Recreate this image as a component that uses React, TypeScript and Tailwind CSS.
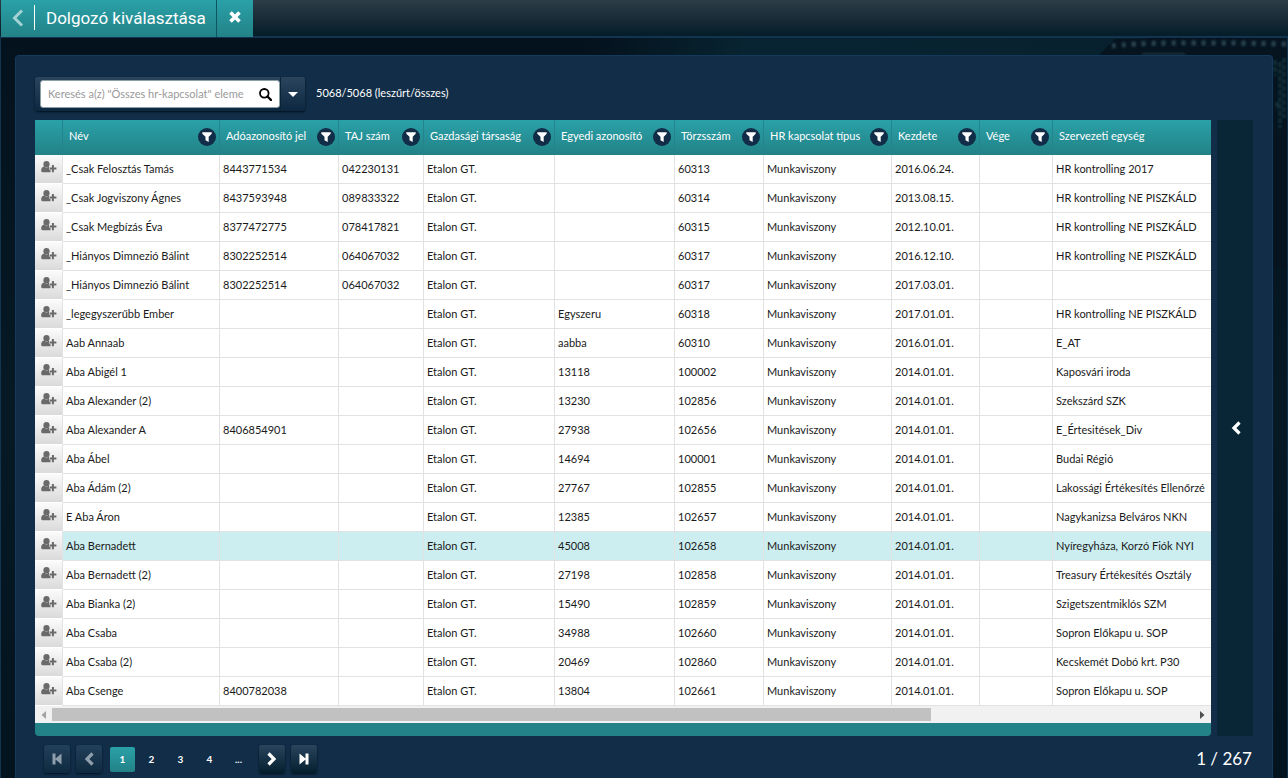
import type { ReactNode } from "react";

type Row = [string, string, string, string, string, string, string];

// name, tax id, TAJ, unique id, staff number, start date, unit
const rows: Row[] = [
  ["_Csak Felosztás Tamás", "8443771534", "042230131", "", "60313", "2016.06.24.", "HR kontrolling 2017"],
  ["_Csak Jogviszony Ágnes", "8437593948", "089833322", "", "60314", "2013.08.15.", "HR kontrolling NE PISZKÁLD"],
  ["_Csak Megbízás Éva", "8377472775", "078417821", "", "60315", "2012.10.01.", "HR kontrolling NE PISZKÁLD"],
  ["_Hiányos Dimnezió Bálint", "8302252514", "064067032", "", "60317", "2016.12.10.", "HR kontrolling NE PISZKÁLD"],
  ["_Hiányos Dimnezió Bálint", "8302252514", "064067032", "", "60317", "2017.03.01.", ""],
  ["_legegyszerűbb Ember", "", "", "Egyszeru", "60318", "2017.01.01.", "HR kontrolling NE PISZKÁLD"],
  ["Aab Annaab", "", "", "aabba", "60310", "2016.01.01.", "E_AT"],
  ["Aba Abigél 1", "", "", "13118", "100002", "2014.01.01.", "Kaposvári iroda"],
  ["Aba Alexander (2)", "", "", "13230", "102856", "2014.01.01.", "Szekszárd SZK"],
  ["Aba Alexander A", "8406854901", "", "27938", "102656", "2014.01.01.", "E_Értesitések_Div"],
  ["Aba Ábel", "", "", "14694", "100001", "2014.01.01.", "Budai Régió"],
  ["Aba Ádám (2)", "", "", "27767", "102855", "2014.01.01.", "Lakossági Értékesítés Ellenőrzé"],
  ["E Aba Áron", "", "", "12385", "102657", "2014.01.01.", "Nagykanizsa Belváros NKN"],
  ["Aba Bernadett", "", "", "45008", "102658", "2014.01.01.", "Nyíregyháza, Korzó Fiók NYI"],
  ["Aba Bernadett (2)", "", "", "27198", "102858", "2014.01.01.", "Treasury Értékesítés Osztály"],
  ["Aba Bianka (2)", "", "", "15490", "102859", "2014.01.01.", "Szigetszentmiklós SZM"],
  ["Aba Csaba", "", "", "34988", "102660", "2014.01.01.", "Sopron Előkapu u. SOP"],
  ["Aba Csaba (2)", "", "", "20469", "102860", "2014.01.01.", "Kecskemét Dobó krt. P30"],
  ["Aba Csenge", "8400782038", "", "13804", "102661", "2014.01.01.", "Sopron Előkapu u. SOP"],
];

const selectedRow = 13;

const columns = [
  { title: "Név", width: "w-[157px]" },
  { title: "Adóazonosító jel", width: "w-[119px]" },
  { title: "TAJ szám", width: "w-[85px]" },
  { title: "Gazdasági társaság", width: "w-[131px]" },
  { title: "Egyedi azonosító", width: "w-[120px]" },
  { title: "Törzsszám", width: "w-[89px]" },
  { title: "HR kapcsolat típus", width: "w-[128px]" },
  { title: "Kezdete", width: "w-[88px]" },
  { title: "Vége", width: "w-[73px]" },
  { title: "Szervezeti egység", width: "" },
];

function Chevron({ className, flip = false }: { className: string; flip?: boolean }) {
  return (
    <svg viewBox="0 0 12 14" className={className} fill="none" stroke="currentColor" strokeWidth="3.200" aria-hidden="true">
      <path d={flip ? "M2.500 1.500 L8 7 L2.500 12.500" : "M9.500 1.500 L4 7 L9.500 12.500"} />
    </svg>
  );
}

function EndIcon({ flip = false }: { flip?: boolean }) {
  return (
    <svg viewBox="0 0 12 14" className="h-[14px] w-[12px]" fill="currentColor" aria-hidden="true">
      {flip ? (
        <path d="M1.500 1.500 L7.500 6.500 V1.500 H10.500 V12.500 H7.500 V7.500 L1.500 12.500 Z" />
      ) : (
        <path d="M1.500 1.500 H4.500 V6.500 L10.500 1.500 V12.500 L4.500 7.500 V12.500 H1.500 Z" />
      )}
    </svg>
  );
}

function PagerButton({ label, dim = false, children }: { label: string; dim?: boolean; children: ReactNode }) {
  return (
    <button
      type="button"
      aria-label={label}
      className={`flex h-7 w-[26px] items-center justify-center rounded-[3px] shadow-[0_1px_2px_#04121f] ${
        dim
          ? "bg-linear-to-b from-[#23405a] to-[#0e2a40] text-[#8f9eab]"
          : "bg-linear-to-b from-[#2a455d] to-[#04202f] text-white"
      }`}
    >
      {children}
    </button>
  );
}

function FilterButton({ title }: { title: string }) {
  return (
    <button
      type="button"
      aria-label={`${title} szűrése`}
      className="flex size-[18px] shrink-0 items-center justify-center rounded-full bg-[#112d47]"
    >
      <svg viewBox="0 0 10 10" className="size-[10px]" fill="white" aria-hidden="true">
        <path d="M0.300 0.300 H9.700 V1.700 L6.700 4.800 V10 L3.500 8.200 V4.800 L0.300 1.700 Z" />
      </svg>
    </button>
  );
}

function UserAddIcon() {
  return (
    <svg viewBox="0 0 16 12" className="h-3 w-4" fill="#6a6a6a" aria-hidden="true">
      <ellipse cx="5.500" cy="3.300" rx="3.100" ry="3.300" />
      <path d="M3 5.600 C1 6.300 0.200 7.300 0.200 9.500 C0.200 10.900 0.800 11.300 2 11.300 H9.500 V8.800 H8.200 V6.200 L8 5.600 Q5.500 7.700 3 5.600 Z" />
      <path d="M10.900 4 H12.900 V6.500 H15.400 V8.500 H12.900 V11.200 H10.900 V8.500 H8.800 V6.500 H10.900 Z" />
    </svg>
  );
}

function Scenery() {
  return (
    <svg className="absolute top-0 right-0 h-[230px] w-[700px]" viewBox="0 0 700 230" aria-hidden="true">
      <defs>
        <linearGradient id="glow" x1="0" x2="1" y1="0" y2="0">
          <stop offset="0" stopColor="#082432" stopOpacity="0" />
          <stop offset="0.300" stopColor="#082432" />
          <stop offset="1" stopColor="#07202e" />
        </linearGradient>
        <filter id="haze">
          <feGaussianBlur stdDeviation="0.8" />
        </filter>
      </defs>
      <rect width="560" height="17" fill="url(#glow)" />
      <path d="M512 17 L528 1 L700 0 V230 H685 V17 Z" fill="#05141f" />
      <g filter="url(#haze)" fill="none">
        <path d="M525 8 Q560 3 700 6" stroke="#2a444f" strokeWidth="5" strokeDasharray="4 6" />
        <path d="M555 16 H598" stroke="#1c323c" strokeWidth="2" />
        <path d="M688 22 V38 M693 24 V90 M697 20 V80 M690 64 V72" stroke="#17313d" strokeWidth="3" strokeDasharray="5 2" />
      </g>
    </svg>
  );
}

export default function App() {
  return (
    <div className="flex min-h-screen flex-col bg-[#04121d] font-[Lato,'Liberation_Sans',sans-serif] text-[11px] text-white">
      <header className="flex h-[38px] border-b-2 border-[#12344f] bg-linear-to-b from-[#2d3c46] to-[#041d29] pl-px">
        <div className="flex h-[37px] shrink-0 bg-linear-to-b from-[#2aa1a8] to-[#228287]">
          <button type="button" aria-label="Vissza" className="flex w-[33px] items-center justify-center pb-0.5 text-[#a4d3d5]">
            <svg viewBox="0 0 12 18" className="h-[18px] w-3" fill="none" stroke="currentColor" strokeWidth="3" aria-hidden="true">
              <path d="M10 1.500 L2.500 9 L10 16.500" />
            </svg>
          </button>
          <h1 className="mt-[5px] mb-[7px] flex items-center border-l border-white pr-[10px] pl-[11px] font-[Roboto,'Noto_Sans',sans-serif] text-[17px] leading-6 whitespace-nowrap">
            Dolgozó kiválasztása
          </h1>
          <button
            type="button"
            aria-label="Bezárás"
            className="flex w-[37px] items-center justify-center border-l border-[#0d5560] pb-1"
          >
            <svg viewBox="0 0 12 12" className="size-3" stroke="white" strokeWidth="3.600" aria-hidden="true">
              <path d="M1.500 1.500 L10.500 10.500 M10.500 1.500 L1.500 10.500" />
            </svg>
          </button>
        </div>
      </header>

      <div className="relative flex flex-1 flex-col border-x border-[#12344f] bg-linear-to-b from-[#04121d] via-[#061925] to-[#04141f] px-[14px] pt-[17px]">
        <Scenery />
        <main className="relative flex flex-1 flex-col rounded-t-[4px] border border-b-0 border-[#14395a] bg-[#112d47] px-[19px] pt-[21px] pb-1">
          <div className="flex items-center">
            <div className="flex h-[34px] w-[270px] rounded-[3px] bg-linear-to-b from-[#2a455d] to-[#0c2840] shadow-[0_1px_2px_#04121f]">
              <label className="my-[3px] ml-[5px] flex h-7 flex-1 items-center rounded-[3px] border border-[#8ba0a4] bg-white pr-[7px] pl-[7px]">
                <input
                  type="text"
                  aria-label="Keresés"
                  placeholder={'Keresés a(z) "Összes hr-kapcsolat" eleme'}
                  className="min-w-0 flex-1 bg-transparent text-[11px] text-black outline-none placeholder:text-[#999999]"
                />
                <svg viewBox="0 0 13 13" className="ml-[3px] size-[13px] shrink-0" fill="none" stroke="black" aria-hidden="true">
                  <circle cx="5.300" cy="5.300" r="4.300" strokeWidth="1.800" />
                  <path d="M8.500 8.500 L12 12" strokeWidth="2.400" strokeLinecap="round" />
                </svg>
              </label>
              <button
                type="button"
                aria-label="Keresési lehetőségek"
                className="flex w-[25px] items-center justify-center border-l border-[#0a2236]"
              >
                <svg viewBox="0 0 10 5" className="h-[5px] w-[10px]" fill="white" aria-hidden="true">
                  <path d="M0 0 H10 L5 5 Z" />
                </svg>
              </button>
            </div>
            <p className="ml-[11px] pb-0.5 text-[11px]">5068/5068 (leszűrt/összes)</p>
          </div>

          <div className="mt-[9px] flex">
            <section className="min-w-0 flex-1 overflow-hidden rounded-b-[4px] bg-[#228287]">
              <div className="overflow-hidden">
                <table className="w-[1532px] table-fixed border-separate border-spacing-0 text-left text-[#1a1a1a]">
                  <thead>
                    <tr className="h-[35px] bg-linear-to-b from-[#2aa1a8] to-[#228287] text-white">
                      <th aria-label="Művelet" className="w-7 border-r border-[#23858b] p-0" />
                      {columns.map((column) => (
                        <th key={column.title} className={`${column.width} border-r border-[#23858b] p-0 pb-px font-normal`}>
                          <div className="flex items-center justify-between pr-[3px] pl-[6px]">
                            <span className="pb-px whitespace-nowrap">{column.title}</span>
                            {column.width && <FilterButton title={column.title} />}
                          </div>
                        </th>
                      ))}
                    </tr>
                  </thead>
                  <tbody>
                    {rows.map(([name, tax, taj, unique, staff, start, unit], index) => (
                      <tr key={index} className={`h-[29px] ${index === selectedRow ? "bg-[#cceef0]" : "bg-white"}`}>
                        <td className="border-r border-b border-r-[#e2e2e2] border-b-white bg-linear-to-b from-[#fbfbfb] to-[#dadada] p-0">
                          <button type="button" aria-label={`${name} kiválasztása`} className="flex h-7 w-full items-center justify-center pb-1">
                            <UserAddIcon />
                          </button>
                        </td>
                        {[name, tax, taj, "Etalon GT.", unique, staff, "Munkaviszony", start, "", unit].map((value, cell) => (
                          <td key={cell} className="border-r border-b border-[#e2e2e2] px-[3px] py-0 whitespace-nowrap">
                            {value}
                          </td>
                        ))}
                      </tr>
                    ))}
                  </tbody>
                </table>
              </div>
              <div className="flex h-[17px] items-center bg-[#f1f1f1]">
                <button type="button" aria-label="Görgetés balra" className="flex w-[17px] justify-center text-[#a3a3a3]">
                  <svg viewBox="0 0 5 8" className="h-2 w-[5px]" fill="currentColor" aria-hidden="true">
                    <path d="M5 0 V8 L0.500 4 Z" />
                  </svg>
                </button>
                <div className="flex-1">
                  <div className="h-[13px] w-[77%] bg-[#c1c1c1]" />
                </div>
                <button type="button" aria-label="Görgetés jobbra" className="flex w-[17px] justify-center text-[#505050]">
                  <svg viewBox="0 0 5 8" className="h-2 w-[5px]" fill="currentColor" aria-hidden="true">
                    <path d="M0 0 V8 L4.500 4 Z" />
                  </svg>
                </button>
              </div>
              <div className="h-[13px]" />
            </section>
            <button
              type="button"
              aria-label="Oldalsó panel megnyitása"
              className="ml-[6px] flex w-9 items-center justify-center bg-[#082636] pl-0.5 text-white"
            >
              <Chevron className="h-[14px] w-3" />
            </button>
          </div>

          <nav aria-label="Lapozás" className="mt-[9px] flex items-center justify-between pr-px pl-[9px]">
            <div className="flex items-center">
              <div className="flex gap-[6px]">
                <PagerButton label="Első oldal" dim>
                  <EndIcon />
                </PagerButton>
                <PagerButton label="Előző oldal" dim>
                  <Chevron className="h-[14px] w-3" />
                </PagerButton>
              </div>
              <div className="mx-2 flex gap-1 text-[10px] font-bold">
                <button type="button" aria-current="page" className="size-[25px] rounded-[2px] bg-linear-to-b from-[#2aa1a8] to-[#228287]">
                  1
                </button>
                <button type="button" className="size-[25px]">2</button>
                <button type="button" className="size-[25px]">3</button>
                <button type="button" className="size-[25px]">4</button>
                <button type="button" className="size-[25px]">...</button>
              </div>
              <div className="flex gap-[6px]">
                <PagerButton label="Következő oldal">
                  <Chevron className="h-[14px] w-3" flip />
                </PagerButton>
                <PagerButton label="Utolsó oldal">
                  <EndIcon flip />
                </PagerButton>
              </div>
            </div>
            <p className="text-[17px] leading-6">1 / 267</p>
          </nav>
        </main>
      </div>
    </div>
  );
}
